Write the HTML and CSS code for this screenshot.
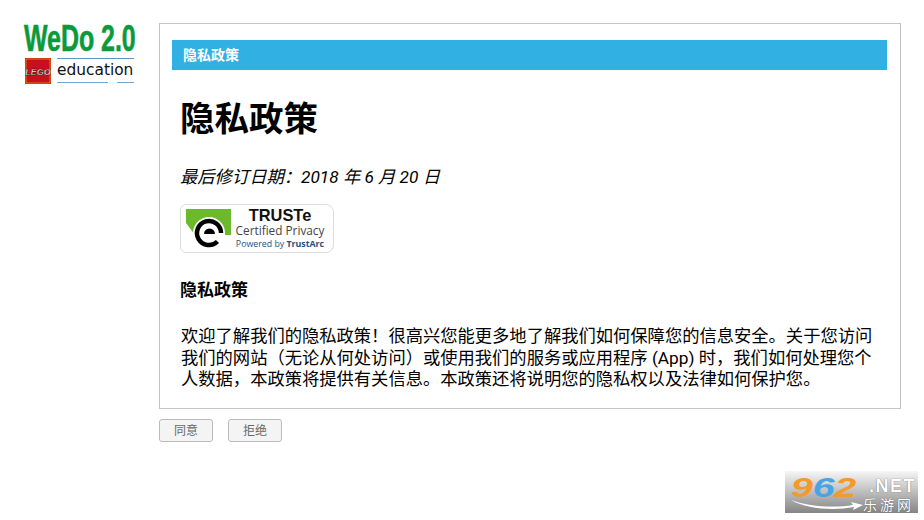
FILE: index.html
```html
<!DOCTYPE html>
<html>
<head>
    <title>隐私政策</title>
    <link rel="stylesheet" href="styles.css">
</head>
<body>
    <div class="sidebar">
        <div class="wedo">WeDo 2.0</div>
        <div class="edu">
            <svg class="lego" width="26" height="26" viewBox="0 0 26 26">
                <rect width="26" height="26" fill="#c8101c"/>
                <rect x="1" y="1" width="24" height="24" fill="none" stroke="#e8c800" stroke-width="0.600"/>
                <text x="13" y="16.500" text-anchor="middle" class="lego-text">LEGO</text>
            </svg>
            <div class="edu-word">
                <span class="edu-text">education</span>
                <div class="edu-lines"><i class="line-long"></i><i class="line-short"></i></div>
            </div>
        </div>
    </div>

    <div class="main">
        <div class="box">
            <div class="bar">隐私政策</div>
            <h1>隐私政策</h1>
            <p class="date">最后修订日期：2018 年 6 月 20 日</p>
            <div class="truste">
                <svg class="truste-mark" width="54" height="47" viewBox="0 0 54 47">
                    <path d="M5 4H50V30H14L5 18Z" fill="#6cb92d"/>
                    <circle cx="28" cy="28" r="16" fill="#fff"/>
                    <path d="M40 28A12 12 0 1 0 36.500 36.500" fill="none" stroke="#000" stroke-width="4.500"/>
                    <path d="M23 29A5.500 5.500 0 0 1 34 29Z" fill="#000"/>
                </svg>
                <div class="truste-words">
                    <span class="truste-name">TRUSTe</span>
                    <span class="truste-cert">Certified Privacy</span>
                    <span class="truste-power">Powered by <b>TrustArc</b></span>
                </div>
            </div>
            <h2>隐私政策</h2>
            <p class="intro">欢迎了解我们的隐私政策！很高兴您能更多地了解我们如何保障您的信息安全。关于您访问我们的网站（无论从何处访问）或使用我们的服务或应用程序 (App) 时，我们如何处理您个人数据，本政策将提供有关信息。本政策还将说明您的隐私权以及法律如何保护您。</p>
        </div>
        <div class="actions">
            <button>同意</button>
            <button>拒绝</button>
        </div>
    </div>

    <div class="watermark">
        <span class="wm-num"><em>9</em><em class="blue">6</em><em>2</em></span>
        <div class="wm-side">
            <span class="wm-net">.NET</span>
            <span class="wm-cn">乐游网</span>
        </div>
        <svg class="wm-swoosh" width="72" height="12" viewBox="0 0 72 12">
            <path d="M0 1C18 8 44 9 62 6L60 3L72 6L62 11L63 8C42 12 16 10 0 1Z" fill="#fff"/>
        </svg>
    </div>
</body>
</html>
```

FILE: styles.css
```css
html, body {
    height: 100%;
}

body {
    margin: 0;
    display: flex;
    background: #fff;
    color: #000;
    font-family: Roboto, "Noto Sans CJK SC", sans-serif;
    overflow: hidden;
}

.sidebar {
    width: 159px;
    flex-shrink: 0;
    padding: 21px 0 0 24px;
    box-sizing: border-box;
}

.wedo {
    font-family: "Liberation Sans", sans-serif;
    font-weight: bold;
    font-size: 36px;
    line-height: 36px;
    color: #0a9a3a;
    transform: scaleX(0.692);
    transform-origin: left;
    white-space: nowrap;
    -webkit-text-stroke: 0.6px #0a9a3a;
}

.edu {
    display: flex;
    gap: 6px;
    margin-top: 1px;
    margin-left: 1px;
}

.lego-text {
    font-family: "Liberation Sans", sans-serif;
    font-size: 9px;
    font-weight: bold;
    font-style: italic;
    fill: #fff;
    stroke: #111;
    stroke-width: 0.400px;
}

.edu-word {
    border-top: 1px solid #5b97c9;
    width: 77px;
}

.edu-text {
    display: block;
    font-family: "DejaVu Sans", sans-serif;
    font-size: 15.400px;
    line-height: 22px;
    color: #111;
}

.edu-lines {
    display: flex;
    justify-content: space-between;
    margin-top: 1px;
}

.edu-lines i {
    display: block;
    height: 1px;
    background: #6fa8d6;
}

.line-long {
    width: 51px;
}

.line-short {
    width: 17px;
}

.main {
    width: 742px;
    padding-top: 23px;
}

.box {
    border: 1px solid #c4c4c4;
    height: 386px;
    box-sizing: border-box;
    padding: 16px 13px 0 12px;
    overflow: hidden;
}

.bar {
    background: #30b0e3;
    color: #fff;
    font-size: 14px;
    font-weight: bold;
    line-height: 30px;
    padding-left: 11px;
}

h1 {
    margin: 25px 0 0 8px;
    font-size: 34.500px;
    line-height: 48px;
    font-weight: bold;
}

.date {
    margin: 22px 0 0 8px;
    font-size: 17.300px;
    line-height: 24px;
    font-style: italic;
}

.truste {
    display: flex;
    width: 154px;
    height: 49px;
    box-sizing: border-box;
    margin: 15px 0 0 8px;
    border: 1px solid #ddd;
    border-radius: 6px 8px 8px 6px;
    overflow: hidden;
}

.truste-mark {
    flex-shrink: 0;
}

.truste-words {
    display: flex;
    flex-direction: column;
    align-items: center;
    padding-top: 2px;
    width: 90px;
    white-space: nowrap;
}

.truste-name {
    font-family: "Liberation Sans", sans-serif;
    font-size: 16.400px;
    font-weight: bold;
    line-height: 17px;
    color: #111;
}

.truste-cert {
    font-family: "Open Sans", sans-serif;
    font-size: 11.800px;
    line-height: 12px;
    color: #444;
}

.truste-power {
    font-family: "Open Sans", sans-serif;
    font-size: 8.800px;
    line-height: 17px;
    color: #23537d;
}

h2 {
    margin: 25px 0 0 8px;
    font-size: 17px;
    line-height: 24px;
    font-weight: bold;
}

.intro {
    margin: 24px 0 0 9px;
    width: 696px;
    font-size: 17.300px;
    line-height: 21.500px;
}

.actions {
    display: flex;
    gap: 15px;
    margin-top: 10px;
}

button {
    width: 54px;
    height: 23px;
    padding: 0 0 2px;
    background: #f4f4f4;
    border: 1px solid #bbb;
    border-radius: 3px;
    color: #666;
    font-family: "Noto Sans CJK SC", sans-serif;
    font-size: 12px;
}

.watermark {
    position: absolute;
    left: 785px;
    top: 471px;
    width: 133px;
    height: 42px;
    display: flex;
    background: linear-gradient(#f6f6f6, #858585);
}

.wm-num {
    width: 78px;
    margin-left: 6px;
    font-family: "Liberation Sans", sans-serif;
    font-weight: bold;
    font-size: 28px;
    line-height: 33px;
    color: #f39a2b;
    transform: scaleX(1.4);
    transform-origin: left;
}

.wm-num em {
    font-style: italic;
}

.wm-num .blue {
    color: #48a4e4;
}

.wm-side {
    display: flex;
    flex-direction: column;
    color: #fff;
}

.wm-net {
    font-family: "Liberation Sans", sans-serif;
    font-size: 18px;
    font-weight: bold;
    line-height: 18px;
    margin-top: 6px;
    letter-spacing: 1.500px;
    text-shadow: 0 0 1px #444;
}

.wm-cn {
    margin-top: 2px;
    margin-left: -6px;
    font-size: 14px;
    line-height: 16px;
    letter-spacing: 3px;
    text-shadow: 0 0 1px #444;
}

.wm-swoosh {
    position: absolute;
    left: 6px;
    top: 28px;
}
```
